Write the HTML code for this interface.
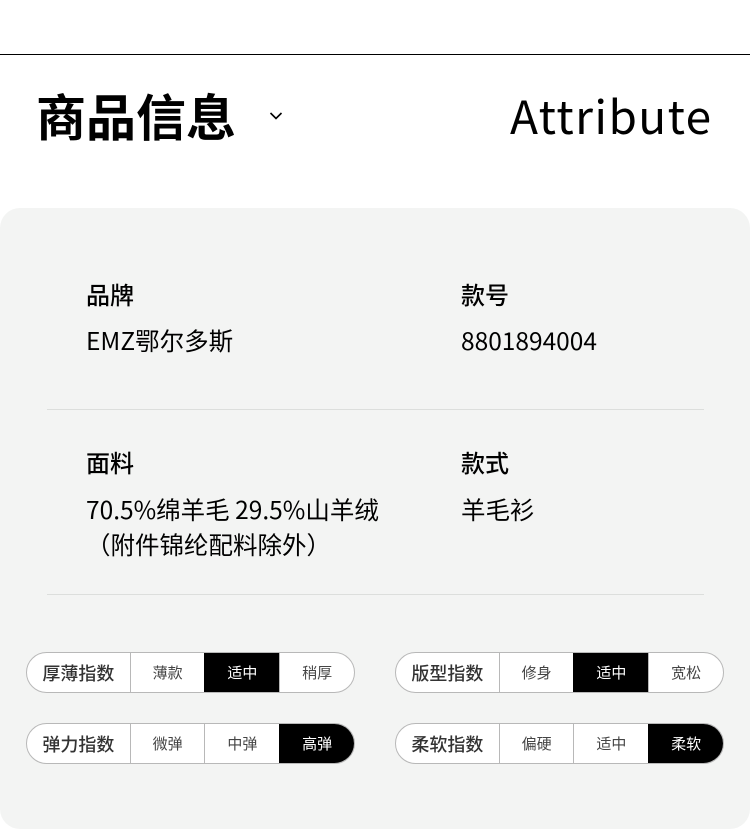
<!DOCTYPE html>
<html><head><meta charset="utf-8"><style>
*{margin:0;padding:0;box-sizing:border-box}
body{width:750px;height:830px;background:#fff;font-family:"Noto Sans CJK SC",sans-serif;color:#000;position:relative;overflow:hidden}
.abs{position:absolute;white-space:nowrap}
.line{position:absolute;left:0;top:54px;width:750px;height:1px;background:#000}
.panel{position:absolute;left:0;top:208px;width:750px;height:621px;background:#f3f4f3;border-radius:20px}
.lab{font-size:24px;font-weight:500;line-height:30px}
.val{font-size:24.5px;line-height:34px}
.div{position:absolute;left:47px;width:657px;height:1px;background:#dcdedc}
.pill{position:absolute;width:329px;height:41px;border:1px solid #b8b8b8;border-radius:21px;background:#fff;display:flex;overflow:hidden}
.pill div{display:flex;align-items:center;justify-content:center;font-size:15px;color:#444;width:75px;border-left:1px solid #b8b8b8}
.pill div.h{width:103px;border-left:none;font-size:18px;font-weight:500;color:#333}
.pill div.on{background:#000;color:#fff;border-left-color:#000}
</style></head><body>
<div class="line"></div>
<div class="abs" style="left:36px;top:80px;font-size:50px;font-weight:700;line-height:70px">商品信息</div>
<svg class="abs" style="left:269px;top:111px" width="14" height="10" viewBox="0 0 14 10"><path d="M1.5 2 L7 7.5 L12.5 2" fill="none" stroke="#000" stroke-width="1.6"/></svg>
<div class="abs" style="left:510px;top:82px;font-size:46px;line-height:66px;letter-spacing:1.4px">Attribute</div>
<div class="panel"></div>
<div class="abs lab" style="left:86px;top:279px">品牌</div>
<div class="abs val" style="left:86px;top:324px">EMZ鄂尔多斯</div>
<div class="abs lab" style="left:461px;top:279px">款号</div>
<div class="abs val" style="left:461px;top:324px">8801894004</div>
<div class="div" style="top:409px"></div>
<div class="abs lab" style="left:86px;top:447px">面料</div>
<div class="abs val" style="left:86px;top:493px">70.5%绵羊毛 29.5%山羊绒</div>
<div class="abs val" style="left:86px;top:528px">（附件锦纶配料除外）</div>
<div class="abs lab" style="left:461px;top:447px">款式</div>
<div class="abs val" style="left:461px;top:493px">羊毛衫</div>
<div class="div" style="top:594px"></div>
<div class="pill" style="left:26px;top:652px"><div class="h">厚薄指数</div><div>薄款</div><div class="on">适中</div><div>稍厚</div></div>
<div class="pill" style="left:395px;top:652px"><div class="h">版型指数</div><div>修身</div><div class="on">适中</div><div>宽松</div></div>
<div class="pill" style="left:26px;top:723px"><div class="h">弹力指数</div><div>微弹</div><div>中弹</div><div class="on">高弹</div></div>
<div class="pill" style="left:395px;top:723px"><div class="h">柔软指数</div><div>偏硬</div><div>适中</div><div class="on">柔软</div></div>
</body></html>
